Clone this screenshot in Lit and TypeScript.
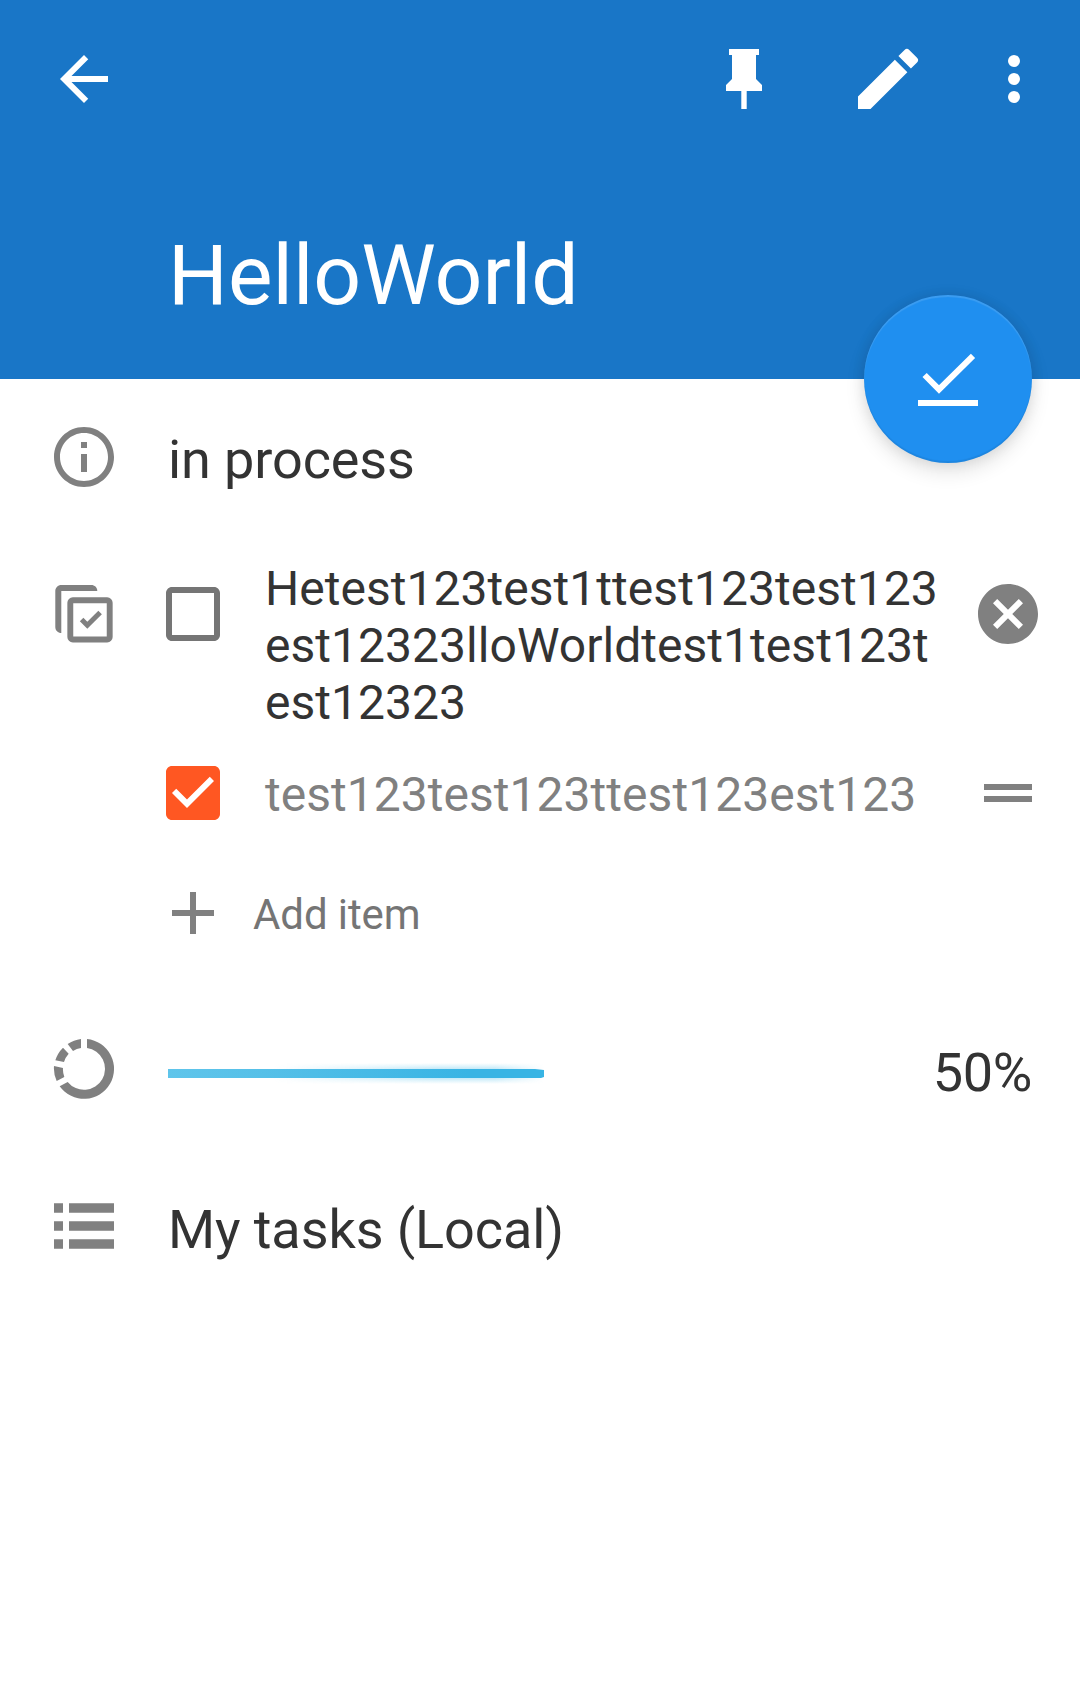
import { LitElement, html, css, svg } from "lit";
import { customElement, property } from "lit/decorators.js";

const icons: Record<string, { box: string; body: unknown }> = {
  back: { box: "0 0 24 24", body: svg`<path d="M20 11H7.83l5.59-5.59L12 4l-8 8 8 8 1.41-1.41L7.83 13H20v-2z"/>` },
  pin: { box: "0 0 24 24", body: svg`<path d="M16 12V4h1V2H7v2h1v8l-2 2v2h5.1v6h1.8v-6H18v-2l-2-2z"/>` },
  edit: { box: "0 0 24 24", body: svg`<path d="M3 17.25V21h3.75L17.81 9.94l-3.75-3.75L3 17.25zM20.71 7.04a1 1 0 0 0 0-1.41l-2.34-2.34a1 1 0 0 0-1.41 0l-1.83 1.83 3.75 3.75 1.83-1.83z"/>` },
  more: { box: "0 0 24 24", body: svg`<circle cx="12" cy="6" r="2"/><circle cx="12" cy="12" r="2"/><circle cx="12" cy="18" r="2"/>` },
  done: { box: "0 0 72 72", body: svg`<path d="M12.6 32 27 46.4 61 12.8" fill="none" stroke="currentColor" stroke-width="6"/><path d="M6 57h60v6H6z"/>` },
  info: { box: "0 0 24 24", body: svg`<path d="M11 17h2v-6h-2v6zm1-15C6.48 2 2 6.48 2 12s4.48 10 10 10 10-4.48 10-10S17.52 2 12 2zm0 18c-4.41 0-8-3.59-8-8s3.59-8 8-8 8 3.59 8 8-3.59 8-8 8zM11 9h2V7h-2v2z"/>` },
  checklist: { box: "0 0 72 72", body: svg`<path d="M13.3 61V19H49.3C49.3 15.4 46.5 13.1 43.3 13.1H13.3C10 13.1 7.3 15.8 7.3 19.1V55C7.3 58.5 10 61 13.3 61z"/><rect x="22.3" y="28.3" width="39.4" height="39.2" rx="2.5" fill="none" stroke="currentColor" stroke-width="5.9"/><path d="M33.6 47.6 39.3 53.3 52.1 40.5" fill="none" stroke="currentColor" stroke-width="5"/>` },
  unchecked: { box: "0 0 24 24", body: svg`<path d="M19 5v14H5V5h14m0-2H5c-1.1 0-2 .9-2 2v14c0 1.1.9 2 2 2h14c1.1 0 2-.9 2-2V5c0-1.1-.9-2-2-2z"/>` },
  checked: { box: "0 0 24 24", body: svg`<path d="M19 3H5c-1.11 0-2 .9-2 2v14c0 1.1.89 2 2 2h14c1.11 0 2-.9 2-2V5c0-1.1-.89-2-2-2zm-9 14l-5-5 1.41-1.41L10 14.17l7.59-7.59L19 8l-9 9z"/>` },
  clear: { box: "0 0 24 24", body: svg`<path d="M12 2C6.47 2 2 6.47 2 12s4.47 10 10 10 10-4.47 10-10S17.53 2 12 2zm5 13.59L15.59 17 12 13.41 8.41 17 7 15.59 10.59 12 7 8.41 8.41 7 12 10.59 15.59 7 17 8.41 13.41 12 17 15.59z"/>` },
  drag: { box: "0 0 24 24", body: svg`<path d="M4 9h16v2H4zM4 13h16v2H4z"/>` },
  add: { box: "0 0 24 24", body: svg`<path d="M19 13h-6v6h-2v-6H5v-2h6V5h2v6h6v2z"/>` },
  progress: { box: "-108 -108 216 216", body: svg`<path d="M9-90A90 90 0 1 1-73 52L-49 39A63 63 0 1 0 9-63zM-9-90V-63A63 63 0 0 0-33-54L-49-75A90 90 0 0 1-9-90zM-63-64-46-46A63 63 0 0 0-60-21L-86-26A90 90 0 0 1-63-64zM-90-9-63-3A63 63 0 0 0-59 24L-82 36A90 90 0 0 1-90-9z"/>` },
  list: { box: "0 0 72 72", body: svg`<path d="M6 12.3h9v9.5H6zM21 12.3h45v9.5H21zM6 30.3h9v9.5H6zM21 30.3h45v9.5H21zM6 48.3h9v9.5H6zM21 48.3h45v9.5H21z"/>` },
};

@customElement("task-icon")
class TaskIcon extends LitElement {
  @property() name = "";
  static styles = css`
    :host { display: block; width: 72px; height: 72px; flex: none; }
    .glyph { display: block; width: 100%; height: 100%; fill: currentColor; }
  `;
  render() {
    const icon = icons[this.name];
    return html`<svg class="glyph" viewBox=${icon.box} aria-hidden="true">${icon.body}</svg>`;
  }
}

@customElement("app-root")
class AppRoot extends LitElement {
  private percent = 50;

  static styles = css`
    :host { display: block; width: 1080px; height: 1699px; background: #fff; color: #333; font-family: Roboto, "Liberation Sans", sans-serif; overflow: hidden; }
    .header { position: relative; height: 379px; box-sizing: border-box; background: #1976c7; color: #fff; padding: 39px 30px 0 48px; }
    .toolbar { display: flex; align-items: center; height: 80px; }
    .spacer { flex: 1; }
    .edit { width: 80px; height: 80px; margin: 0 50px 0 68px; }
    .title { margin: 105px 0 0 120px; font-size: 84px; line-height: 104px; font-weight: 400; }
    .fab { position: absolute; left: 864px; top: 295px; width: 168px; height: 168px; box-sizing: border-box; padding: 48px; border: 0; border-radius: 50%; background: #1f8ff0; color: #fff; box-shadow: 0 9px 20px rgba(0,0,0,.11), 0 0 14px rgba(0,0,0,.09), inset 0 2px 1px rgba(255,255,255,.13), inset 0 -2px 1px rgba(0,0,0,.07); }
    .row { display: flex; align-items: flex-start; padding-left: 48px; }
    .lead { color: #808080; }
    .label { margin-left: 48px; font-size: 54px; line-height: 64px; letter-spacing: -.1px; }
    .status { padding-top: 42px; height: 115px; }
    .status .label { margin-top: 7px; }
    .checklist { padding-top: 42px; height: 398px; }
    .checklist .lead { margin-top: -6px; }
    .items { width: 960px; margin-left: 37px; }
    .item { display: flex; align-items: flex-start; font-size: 48px; line-height: 57px; letter-spacing: .035px; }
    .text { width: 680px; margin: -18px 0 0 36px; white-space: nowrap; }
    .item + .item { margin-top: 36px; }
    .item:first-child { height: 143px; }
    .muted { color: #808080; }
    .box { color: #757575; }
    .on { color: #ff5722; }
    .item.checked .text { margin-top: 9px; }
    .tail { margin-left: 27px; color: #808080; }
    .add { display: flex; align-items: center; margin-top: 48px; color: #757575; font-size: 42px; height: 72px; }
    .add task-icon { color: #808080; }
    .addlabel { margin: 3px 0 0 24px; line-height: 50px; letter-spacing: -.1px; }
    .progress { height: 72px; padding-top: 57px; align-items: center; padding-right: 48px; }
    .track { width: 752px; margin: 9px 0 0 48px; }
    .bar { height: 9px; background: linear-gradient(90deg, #5fc5eb, #56c0e8 25%, #38b4e4 80%); clip-path: polygon(0 0, calc(100% - 9px) 0, 100% 1px, 100% 8px, calc(100% - 3px) 9px, 0 9px); }
    .glow { position: relative; }
    .glow::before { content: ""; position: absolute; left: 28%; right: 0; top: -6px; bottom: -6px; background: linear-gradient(#33b5e500, #33b5e566 40%, #33b5e566 60%, #33b5e500); -webkit-mask-image: linear-gradient(90deg, transparent, #000 60%, #000 82%, transparent); mask-image: linear-gradient(90deg, transparent, #000 60%, #000 82%, transparent); }
    .percent { margin: 7px 0 0 auto; font-size: 54px; line-height: 64px; letter-spacing: -.3px; }
    .folder { padding-top: 86px; }
    .folder .label { margin-top: 7px; }
  `;

  render() {
    return html`
      <header class="header">
        <div class="toolbar">
          <task-icon name="back"></task-icon>
          <span class="spacer"></span>
          <task-icon name="pin"></task-icon>
          <task-icon class="edit" name="edit"></task-icon>
          <task-icon name="more"></task-icon>
        </div>
        <div class="title">HelloWorld</div>
        <button class="fab" aria-label="Complete"><task-icon name="done"></task-icon></button>
      </header>
      <section class="row status">
        <task-icon class="lead" name="info"></task-icon>
        <div class="label">in process</div>
      </section>
      <section class="row checklist">
        <task-icon class="lead" name="checklist"></task-icon>
        <div class="items">
          <div class="item">
            <task-icon class="box" name="unchecked"></task-icon>
            <div class="text">Hetest123test1ttest123test123<br>est12323lloWorldtest1test123t<br>est12323</div>
            <task-icon class="tail" name="clear"></task-icon>
          </div>
          <div class="item checked">
            <task-icon class="on" name="checked"></task-icon>
            <div class="text muted">test123test123ttest123est123</div>
            <task-icon class="tail" name="drag"></task-icon>
          </div>
          <div class="add">
            <task-icon name="add"></task-icon>
            <span class="addlabel">Add item</span>
          </div>
        </div>
      </section>
      <section class="row progress">
        <task-icon class="lead" name="progress"></task-icon>
        <div class="track"><div class="glow" style="width:${this.percent}%"><div class="bar"></div></div></div>
        <div class="percent">${this.percent}%</div>
      </section>
      <section class="row folder">
        <task-icon class="lead" name="list"></task-icon>
        <div class="label">My tasks (Local)</div>
      </section>
    `;
  }
}
